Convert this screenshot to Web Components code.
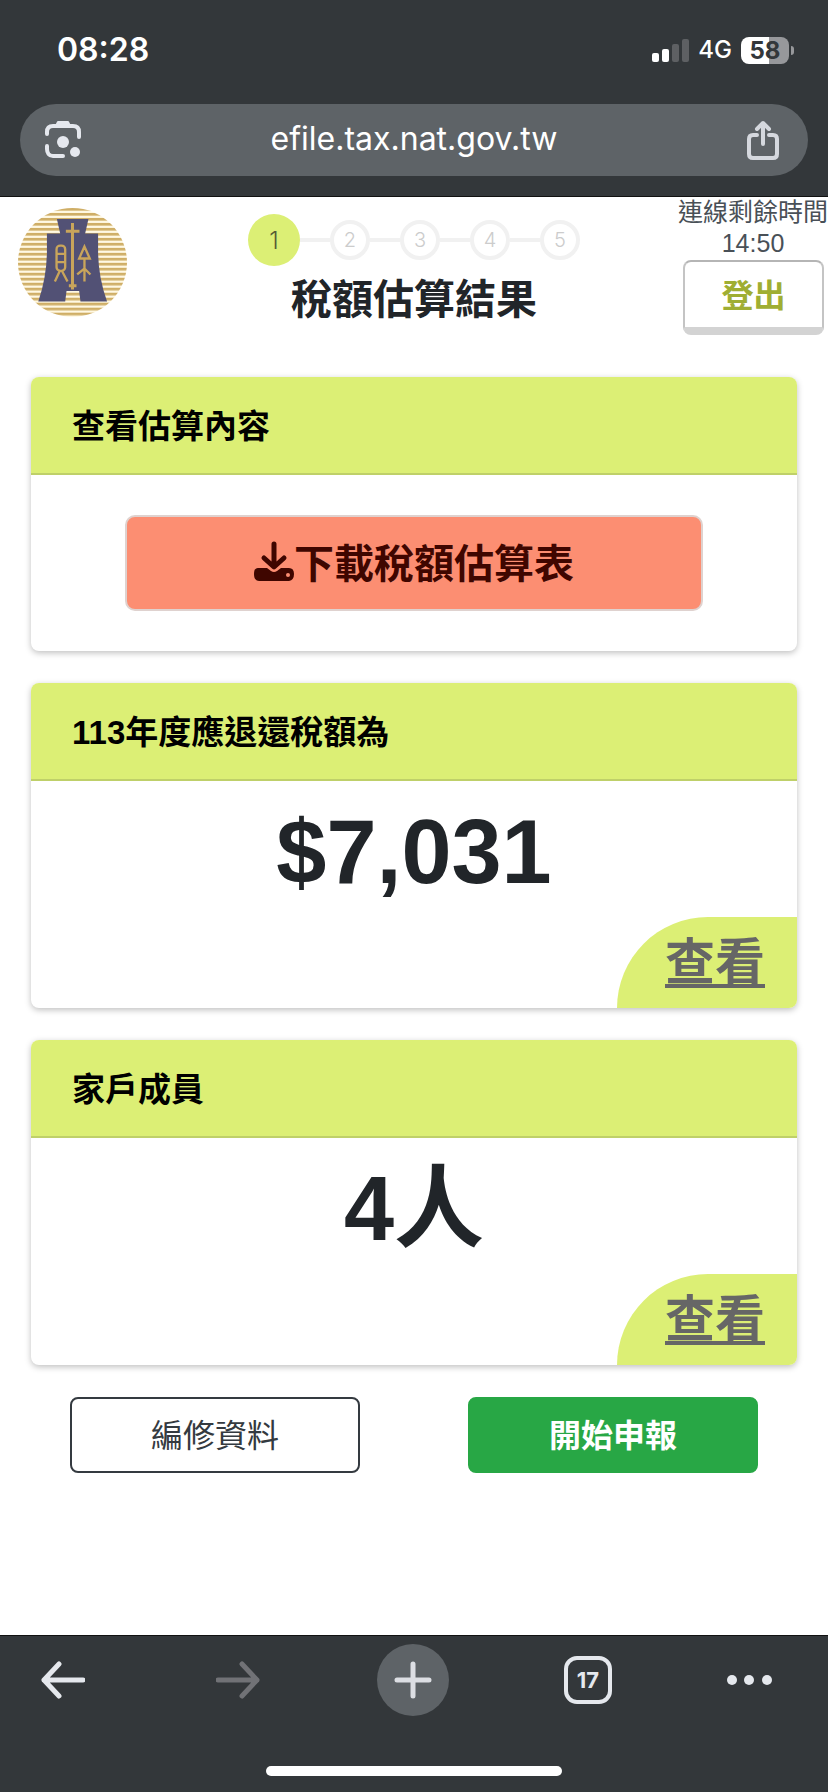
<!DOCTYPE html>
<html lang="zh-Hant">
<head>
<meta charset="UTF-8">
<meta name="viewport" content="width=device-width, initial-scale=1">
<title>稅額估算結果</title>
<style>
    body { margin: 0; background: #fff; color: #212529; font-family: "Liberation Sans", "Noto Sans CJK TC", sans-serif; }
    .page { display: flex; flex-direction: column; min-height: 100vh; }
    main { flex: 1; display: flex; flex-direction: column; gap: 32px; }
    .cards { display: flex; flex-direction: column; gap: 32px; padding: 0 31px; }
</style>
</head>
<body>
<div class="page">
    <browser-top url="efile.tax.nat.gov.tw" time="08:28" network="4G" battery="58"></browser-top>
    <main>
        <page-header step="1" steps="5" remaining="14:50">稅額估算結果</page-header>
        <div class="cards">
            <info-card>
                <span slot="title">查看估算內容</span>
                <download-button>下載稅額估算表</download-button>
            </info-card>
            <info-card>
                <span slot="title">113年度應退還稅額為</span>
                <summary-value link="查看">$7,031</summary-value>
            </info-card>
            <info-card>
                <span slot="title">家戶成員</span>
                <summary-value link="查看">4人</summary-value>
            </info-card>
        </div>
        <page-actions></page-actions>
    </main>
    <browser-toolbar tabs="17"></browser-toolbar>
</div>

<script>
class BrowserTop extends HTMLElement {
    constructor() {
        super();
        this.attachShadow({ mode: 'open' });
    }

    connectedCallback() {
        this.shadowRoot.innerHTML = `
            <style>
                :host { display: block; background: #33373a; border-bottom: 1px solid #111; padding: 0 20px 20px; font-family: Inter, sans-serif; color: #fff; }
                .status { display: flex; align-items: center; height: 104px; box-sizing: border-box; padding: 0 14px 4px 37px; }
                .time { font-size: 32px; font-weight: 600; line-height: 40px; margin-right: auto; }
                .network { font-size: 24px; font-weight: 500; line-height: 32px; margin: 0 9px; }
                .battery { display: flex; align-items: center; gap: 2px; }
                .level { width: 48px; height: 27px; border-radius: 8px; background: linear-gradient(to right, #fff 58%, #97989b 58%); color: #33373a; font-size: 24px; font-weight: 700; line-height: 27px; text-align: center; }
                .tip { width: 3px; height: 9px; border-radius: 0 4px 4px 0; background: #97989b; }
                .bar { display: flex; align-items: center; height: 72px; border-radius: 36px; background: #5e6367; padding: 0 22px; }
                button { border: 0; padding: 0; background: none; color: #e5e8ee; width: 44px; height: 44px; }
                svg { display: block; }
                input { flex: 1; min-width: 0; border: 0; padding: 0 0 2px; background: none; color: #fff; font: 400 32px/40px Inter, sans-serif; text-align: center; outline: none; }
            </style>
            <div class="status">
                <span class="time">${this.getAttribute('time')}</span>
                <svg width="37" height="23" viewBox="0 0 37 23" fill="#fff">
                    <rect x="0" y="14" width="7" height="9" rx="2"/>
                    <rect x="10" y="10" width="7" height="13" rx="2"/>
                    <rect x="20" y="5" width="7" height="18" rx="2" fill="#5e6063"/>
                    <rect x="30" y="0" width="7" height="23" rx="2" fill="#5e6063"/>
                </svg>
                <span class="network">${this.getAttribute('network')}</span>
                <span class="battery"><span class="level">${this.getAttribute('battery')}</span><span class="tip"></span></span>
            </div>
            <div class="bar">
                <button type="button" aria-label="Lens">
                    <svg width="44" height="44" viewBox="0 0 44 44" fill="none" stroke="currentColor" stroke-width="4" stroke-linecap="round">
                        <path d="M5 16v-2c0-4 2-6 6-6h20c4 0 6 2 6 6v5M5 28v3c0 4 2 7 6 7h10"/>
                        <path d="M14 8l2-4h10l2 4z" fill="currentColor" stroke-width="2" stroke-linejoin="round"/>
                        <circle cx="21" cy="24" r="6" fill="currentColor" stroke="none"/>
                        <circle cx="33" cy="34" r="5" fill="currentColor" stroke="none"/>
                    </svg>
                </button>
                <input type="url" aria-label="網址" value="${this.getAttribute('url')}" readonly>
                <button type="button" aria-label="分享">
                    <svg width="44" height="44" viewBox="0 0 44 44" fill="none" stroke="#d5d8de" stroke-width="4" stroke-linecap="round" stroke-linejoin="round">
                        <path d="M15 17h-4c-3 0-4 2-4 4v15c0 2 1 4 4 4h20c3 0 4-2 4-4V21c0-2-1-4-4-4h-4"/>
                        <path d="M21 26V5M15 11l6-6 6 6"/>
                    </svg>
                </button>
            </div>
        `;
    }
}

class StepIndicator extends HTMLElement {
    constructor() {
        super();
        this.attachShadow({ mode: 'open' });
    }

    connectedCallback() {
        const current = Number(this.getAttribute('step'));
        const total = Number(this.getAttribute('steps'));
        let items = '';
        for (let i = 1; i <= total; i++) {
            items += `<li class="${i === current ? 'current' : ''}">${i}</li>`;
        }
        this.shadowRoot.innerHTML = `
            <style>
                :host { display: block; }
                ol { display: flex; align-items: center; justify-content: center; list-style: none; margin: 0; padding: 0; height: 52px; font-family: Inter, sans-serif; font-weight: 300; }
                li { width: 32px; height: 32px; border: 4px solid #f1f1f1; border-radius: 50%; color: #ccc; font-size: 20px; line-height: 32px; text-align: center; }
                li.current { width: 52px; height: 52px; border: 0; background: #dcef75; color: #555a35; font-size: 24px; line-height: 54px; }
                li + li { margin-left: 30px; }
                /* connector to the previous step */
                li + li::before { content: ""; display: block; width: 30px; height: 4px; margin: 14px 0 -18px -34px; background: #f1f1f1; }
            </style>
            <ol>${items}</ol>
        `;
    }
}

class PageHeader extends HTMLElement {
    constructor() {
        super();
        this.attachShadow({ mode: 'open' });
    }

    connectedCallback() {
        this.shadowRoot.innerHTML = `
            <style>
                :host { display: grid; grid-template-columns: 150px 1fr 150px; min-height: 148px; }
                .logo { padding: 11px 0 0 18px; }
                .logo svg { display: block; }
                .center { padding-top: 17px; text-align: center; }
                h1 { margin: 10px 0 0; font-size: 41px; font-weight: 700; line-height: 48px; }
                .session { display: flex; flex-direction: column; color: #495057; font-size: 25px; line-height: 31px; text-align: center; white-space: nowrap; }
                button { margin: 1px 4px 0 5px; height: 75px; box-sizing: border-box; padding: 0 0 4px; border: 2px solid #c4c4c4; border-top-color: #b5b5b5; border-bottom: 8px solid #d3d3d3; border-radius: 8px; background: #fff; color: #9fae33; font: 700 32px/40px "Noto Sans CJK TC", sans-serif; }
            </style>
            <div class="logo">
                <svg width="109" height="109" viewBox="54 52 328 328" role="img" aria-label="財政部">
                    <defs>
                        <pattern id="stripes" width="20" height="15" patternUnits="userSpaceOnUse" y="7"><rect width="20" height="15" fill="#fff8e2"/><rect width="20" height="8" fill="#cfae66"/></pattern>
                    </defs>
                    <circle cx="218" cy="216" r="164" fill="url(#stripes)"/>
                    <path d="M171 85H266L256 129H295V190Q297 265 322 333H242L238 302H200L196 333H115Q139 265 141 190V129H181Z" fill="#525175"/>
                    <g fill="none" stroke="#c9a55b" stroke-width="7">
                        <path d="M218 97V297M198 122H239M207 286H230" stroke-width="9"/>
                        <rect x="170" y="165" width="26" height="76" rx="11"/>
                        <path d="M170 190H196M170 215H196M180 241L165 273M186 241L203 273"/>
                        <path d="M254 168L238 204H270ZM254 204V273M232 252L254 234L272 252"/>
                    </g>
                </svg>
            </div>
            <div class="center">
                <step-indicator step="${this.getAttribute('step')}" steps="${this.getAttribute('steps')}"></step-indicator>
                <h1><slot></slot></h1>
            </div>
            <div class="session">
                <span>連線剩餘時間</span>
                <span>${this.getAttribute('remaining')}</span>
                <button type="button">登出</button>
            </div>
        `;
    }
}

class InfoCard extends HTMLElement {
    constructor() {
        super();
        this.attachShadow({ mode: 'open' });
        this.shadowRoot.innerHTML = `
            <style>
                :host { display: block; border-radius: 8px; overflow: hidden; background: #fff; box-shadow: 0 2px 6px rgba(0,0,0,0.25); }
                h2 { margin: 0; padding: 26px 41px 22px; border-bottom: 2px solid #bfd069; background: #dcef75; color: #000; font-size: 33px; font-weight: 700; line-height: 48px; }
            </style>
            <h2><slot name="title"></slot></h2>
            <slot></slot>
        `;
    }
}

class DownloadButton extends HTMLElement {
    constructor() {
        super();
        this.attachShadow({ mode: 'open' });
        this.shadowRoot.innerHTML = `
            <style>
                :host { display: block; padding: 40px 94px; }
                button { display: flex; align-items: center; justify-content: center; width: 100%; height: 96px; box-sizing: border-box; padding: 0 0 4px; border: 2px solid #dfd2cf; border-radius: 10px; background: #fc8e72; color: #3f0600; font: 700 40px/48px "Noto Sans CJK TC", sans-serif; }
            </style>
            <button type="button">
                <svg width="40" height="40" viewBox="0 0 40 40" fill="none" stroke="currentColor" stroke-width="5" stroke-linecap="round" stroke-linejoin="round">
                    <path d="M5 27h8l4 3q3 2 6 0l4-3h8q5 0 5 6t-5 7H5q-5 0-5-7t5-6z" fill="currentColor" stroke="none"/>
                    <path d="M20 3v22M10 17l10 9 10-9"/>
                    <circle cx="34" cy="34" r="2" fill="#fc8e72" stroke="none"/>
                </svg>
                <span><slot></slot></span>
            </button>
        `;
    }
}

class SummaryValue extends HTMLElement {
    constructor() {
        super();
        this.attachShadow({ mode: 'open' });
    }

    connectedCallback() {
        this.shadowRoot.innerHTML = `
            <style>
                :host { display: flex; flex-direction: column; }
                p { margin: 0; padding: 17px 0 11px; font-size: 90px; font-weight: 700; line-height: 108px; text-align: center; }
                a { align-self: flex-end; height: 91px; box-sizing: border-box; padding: 10px 32px 0 48px; border-top-left-radius: 91px; background: #dcef75; color: #666; font-size: 50px; font-weight: 700; line-height: 72px; text-underline-offset: 4px; text-decoration-thickness: 4px; text-decoration-skip-ink: none; }
            </style>
            <p><slot></slot></p>
            <a href="#">${this.getAttribute('link')}</a>
        `;
    }
}

class PageActions extends HTMLElement {
    constructor() {
        super();
        this.attachShadow({ mode: 'open' });
        this.shadowRoot.innerHTML = `
            <style>
                :host { display: grid; grid-template-columns: 1fr 1fr; gap: 108px; padding: 0 70px; }
                button { height: 76px; padding: 0 0 4px; border: 2px solid #343a40; border-radius: 8px; background: #fff; color: #343a40; font: 400 32px/48px "Noto Sans CJK TC", sans-serif; }
                .primary { border-color: #28a745; background: #28a745; color: #fff; font-weight: 700; }
            </style>
            <button type="button">編修資料</button>
            <button type="button" class="primary">開始申報</button>
        `;
    }
}

class BrowserToolbar extends HTMLElement {
    constructor() {
        super();
        this.attachShadow({ mode: 'open' });
    }

    connectedCallback() {
        this.shadowRoot.innerHTML = `
            <style>
                :host { display: block; border-top: 1px solid #111; background: #33373a; font-family: Inter, sans-serif; }
                nav { display: flex; align-items: center; justify-content: space-between; padding: 8px 56px 0 27px; }
                button { display: flex; align-items: center; justify-content: center; width: 72px; height: 72px; padding: 0; border: 0; border-radius: 50%; background: none; color: #e5e8ed; }
                button:disabled { color: #717276; }
                .new { background: #5e6367; color: #dcdee3; }
                .more { width: 45px; }
                .count { width: 40px; height: 40px; border: 4px solid #e5e8ed; border-radius: 13px; font: 700 22px/40px Inter, sans-serif; }
                svg { fill: none; stroke: currentColor; stroke-width: 5; stroke-linecap: round; stroke-linejoin: round; }
                .home { width: 296px; height: 10px; margin: 50px auto 16px; border-radius: 5px; background: #fff; }
            </style>
            <nav>
                <button type="button" aria-label="上一頁"><svg width="44" height="44" viewBox="0 0 44 44"><path d="M42 22H3M18 6L3 22l15 16"/></svg></button>
                <button type="button" aria-label="下一頁" disabled><svg width="44" height="44" viewBox="0 0 44 44"><path d="M2 22h39M26 6l15 16-15 16"/></svg></button>
                <button type="button" class="new" aria-label="新增分頁"><svg width="44" height="44" viewBox="0 0 44 44"><path d="M22 6v32M6 22h32"/></svg></button>
                <button type="button" aria-label="分頁"><span class="count">${this.getAttribute('tabs')}</span></button>
                <button type="button" class="more" aria-label="更多"><svg width="45" height="10" viewBox="0 0 45 10"><g fill="currentColor" stroke="none"><circle cx="5" cy="5" r="5"/><circle cx="22" cy="5" r="5"/><circle cx="40" cy="5" r="5"/></g></svg></button>
            </nav>
            <div class="home"></div>
        `;
    }
}

customElements.define('browser-top', BrowserTop);
customElements.define('step-indicator', StepIndicator);
customElements.define('page-header', PageHeader);
customElements.define('info-card', InfoCard);
customElements.define('download-button', DownloadButton);
customElements.define('summary-value', SummaryValue);
customElements.define('page-actions', PageActions);
customElements.define('browser-toolbar', BrowserToolbar);
</script>
</body>
</html>
